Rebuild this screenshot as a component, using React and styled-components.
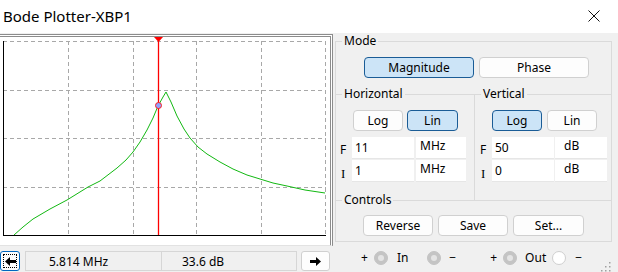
import styled, { createGlobalStyle } from "styled-components";

const Global = createGlobalStyle`
  body {
    margin: 0;
    background: #f0f0f0;
    font-family: "Noto Sans", "Open Sans", sans-serif;
    font-size: 12px;
    color: #000;
  }
`;

const Window = styled.div`
  width: 618px;
  height: 272px;
  display: flex;
  flex-direction: column;
  overflow: hidden;
  background: #f0f0f0;
`;
const TitleBar = styled.div`
  height: 33px;
  background: #fff;
  display: flex;
  align-items: center;
  justify-content: space-between;
  padding-left: 3px;
  flex-shrink: 0;
`;
const Title = styled.div`
  font-size: 15px;
  margin-top: -2px;
`;
const CloseBtn = styled.div`
  width: 46px;
  height: 33px;
  display: flex;
  align-items: center;
  justify-content: center;
  margin-right: 1px;
  margin-top: -2px;
`;
const Body = styled.div`
  display: flex;
  gap: 2px;
  flex: 1;
`;
const LeftCol = styled.div`
  width: 333px;
  display: flex;
  flex-direction: column;
  padding-top: 1px;
`;
const PlotPanel = styled.div`
  height: 208px;
  background: #fff;
  border-top: 3px double #8c8c8c;
  border-right: 3px double #8c8c8c;
  border-bottom: 1px solid #e2e2e2;
`;
const Readout = styled.div`
  display: flex;
  align-items: center;
  height: 20px;
  margin-top: 5px;
`;
const ArrowBtn = styled.div`
  width: ${(p) => p.$w}px;
  height: 20px;
  box-sizing: border-box;
  background: #fdfdfd;
  border: 1px solid ${(p) => (p.$focus ? "#0067c0" : "#d0d0d0")};
  border-radius: 3px;
  display: flex;
  align-items: center;
  justify-content: center;
  margin-left: ${(p) => p.$ml || 0}px;
  position: relative;
  &::after {
    content: "";
    display: ${(p) => (p.$focus ? "block" : "none")};
    position: absolute;
    inset: 2px;
    border: 1px dotted #000;
  }
`;
const ReadField = styled.div`
  width: ${(p) => p.$w}px;
  height: 20px;
  box-sizing: border-box;
  border: 1px solid #d6d6d6;
  padding-left: ${(p) => p.$pl}px;
  display: flex;
  align-items: center;
  font-size: 12px;
  margin-left: ${(p) => p.$ml || 0}px;
`;

const RightCol = styled.div`
  width: 277px;
  display: flex;
  flex-direction: column;
`;
const Group = styled.fieldset`
  margin: 0;
  padding: 0;
  min-width: 0;
  border: 1px solid #dadada;
  border-width: ${(p) => p.$bw || "1px"};
  box-sizing: border-box;
  height: ${(p) => p.$h}px;
  width: ${(p) => (p.$w ? p.$w + "px" : "auto")};
  margin-top: ${(p) => p.$mt || 0}px;
`;
const Legend = styled.legend`
  margin-left: 6px;
  padding: 0 2px;
  line-height: 16px;
  height: 16px;
  font-size: 12px;
`;
const BtnRow = styled.div`
  display: flex;
  gap: ${(p) => p.$gap}px;
  padding-left: ${(p) => p.$pl}px;
  margin-top: ${(p) => p.$mt}px;
`;
const Btn = styled.div`
  width: ${(p) => p.$w}px;
  height: 21px;
  box-sizing: border-box;
  border-radius: 4px;
  border: 1px solid ${(p) => (p.$active ? "#1a5c96" : "#d0d0d0")};
  background: ${(p) => (p.$active ? "#cce4f7" : "#fdfdfd")};
  display: flex;
  align-items: center;
  justify-content: center;
  font-size: 12px;
`;
const Split = styled.div`
  display: flex;
  margin-top: 8px;
`;
const FieldRows = styled.div`
  display: flex;
  flex-direction: column;
  gap: 1px;
  margin-top: 6px;
`;
const FieldRow = styled.div`
  display: flex;
  align-items: center;
  height: 22px;
`;
const FLabel = styled.div`
  width: ${(p) => p.$w}px;
  padding-left: ${(p) => p.$pl}px;
  box-sizing: border-box;
  font-family: ${(p) =>
    p.$serif ? '"Liberation Serif", serif' : '"Noto Sans", sans-serif'};
  font-size: ${(p) => (p.$serif ? 13 : 12)}px;
  margin-top: ${(p) => (p.$serif ? 6 : 3)}px;
`;
const Input = styled.div`
  width: ${(p) => p.$w}px;
  height: 22px;
  box-sizing: border-box;
  background: #fff;
  border-bottom: 1px solid #e6e6e6;
  padding-left: ${(p) => p.$pl}px;
  padding-top: ${(p) => p.$pt}px;
  margin-left: ${(p) => p.$ml || 0}px;
  font-size: 12px;
  line-height: 16px;
`;
const Terminals = styled.div`
  display: flex;
  align-items: center;
  height: 31px;
  position: relative;
`;
const TText = styled.span`
  font-size: 12px;
  margin-left: ${(p) => p.$ml}px;
`;
const Jack = styled.div`
  width: 14px;
  height: 14px;
  box-sizing: border-box;
  border-radius: 50%;
  margin-left: ${(p) => p.$ml}px;
  background: ${(p) => (p.$empty ? "#fff" : "#c4c4c4")};
  border: 1px solid ${(p) => (p.$empty ? "#cfcfcf" : "#c4c4c4")};
  display: flex;
  align-items: center;
  justify-content: center;
  &::after {
    content: "";
    width: 6px;
    height: 6px;
    border-radius: 50%;
    background: ${(p) => (p.$empty ? "transparent" : "#e4e4e4")};
  }
`;
const Grip = styled.svg`
  position: absolute;
  right: 1px;
  bottom: 1px;
`;

const curve = [
  [14, 236], [23, 228], [33, 220], [50, 210], [67, 201], [88, 188], [100, 182],
  [117, 169], [126, 161], [133, 153], [140, 143], [147, 131], [153, 119], [158, 107],
  [163, 98], [166, 93], [171, 103], [177, 117], [184, 130], [190, 139], [198, 148],
  [207, 155], [220, 163], [233, 170], [247, 176], [260, 180], [273, 184], [287, 187],
  [305, 191], [325, 194],
];

function Plot() {
  const xs = [68, 133, 196, 261, 325];
  const ys = [42, 91, 139, 188];
  return (
    <svg width="330" height="208" style={{ display: "block" }}>
      <g transform="translate(0,-38)">
        {xs.map((x) => (
          <line key={x} x1={x + 0.5} y1={42} x2={x + 0.5} y2={236} stroke="#a8a8a8" strokeDasharray="4 3" />
        ))}
        {ys.map((y) => (
          <line key={y} x1={3} y1={y + 0.5} x2={326} y2={y + 0.5} stroke="#a8a8a8" strokeDasharray="4 3" />
        ))}
        <line x1={3.5} y1={42} x2={3.5} y2={237} stroke="#000" />
        <line x1={3} y1={236.5} x2={326} y2={236.5} stroke="#000" />
        <polyline points={curve.map((p) => p.join(",")).join(" ")} fill="none" stroke="#12b812" strokeWidth="1" />
        <line x1={158.5} y1={38} x2={158.5} y2={236} stroke="#ff0000" strokeWidth="1.3" />
        <path d="M154 38 L163 38 L158.5 43 Z" fill="#ff0000" />
        <circle cx={158.5} cy={106.5} r={3} fill="#8fa2ff" stroke="#ff2020" strokeWidth="1" />
      </g>
    </svg>
  );
}

export default function App() {
  return (
    <>
      <Global />
      <Window>
        <TitleBar>
          <Title>Bode Plotter-XBP1</Title>
          <CloseBtn>
            <svg width="12" height="12" viewBox="0 0 12 12">
              <path d="M0.5 0.5 L11.5 11.5 M11.5 0.5 L0.5 11.5" stroke="#111" strokeWidth="1" />
            </svg>
          </CloseBtn>
        </TitleBar>
        <Body>
          <LeftCol>
            <PlotPanel>
              <Plot />
            </PlotPanel>
            <Readout>
              <ArrowBtn $w={20} $focus>
                <svg width="11" height="9" viewBox="0 0 11 9">
                  <path d="M0 4.5 L5 0 L5 3 L11 3 L11 6 L5 6 L5 9 Z" fill="#000" />
                </svg>
              </ArrowBtn>
              <ReadField $w={137} $pl={23} $ml={5}>5.814 MHz</ReadField>
              <ReadField $w={136} $pl={20} $ml={-1}>33.6 dB</ReadField>
              <ArrowBtn $w={29} $ml={4}>
                <svg width="11" height="9" viewBox="0 0 11 9">
                  <path d="M11 4.5 L6 0 L6 3 L0 3 L0 6 L6 6 L6 9 Z" fill="#000" />
                </svg>
              </ArrowBtn>
            </Readout>
          </LeftCol>
          <RightCol>
            <Group $h={209} $w={277}>
              <Legend>Mode</Legend>
              <BtnRow $gap={5} $pl={28} $mt={8}>
                <Btn $w={110} $active>Magnitude</Btn>
                <Btn $w={110}>Phase</Btn>
              </BtnRow>
              <Split>
                <Group $bw="1px 0 0 0" $w={138} $h={114}>
                  <Legend>Horizontal</Legend>
                  <BtnRow $gap={4} $pl={17} $mt={8}>
                    <Btn $w={50}>Log</Btn>
                    <Btn $w={51} $active>Lin</Btn>
                  </BtnRow>
                  <FieldRows>
                    <FieldRow>
                      <FLabel $w={16} $pl={4}>F</FLabel>
                      <Input $w={62} $pl={3} $pt={3}>11</Input>
                      <Input $w={50} $pl={4} $pt={1} $ml={2}>MHz</Input>
                    </FieldRow>
                    <FieldRow>
                      <FLabel $w={16} $pl={5} $serif>I</FLabel>
                      <Input $w={62} $pl={3} $pt={3}>1</Input>
                      <Input $w={50} $pl={4} $pt={1} $ml={2}>MHz</Input>
                    </FieldRow>
                  </FieldRows>
                </Group>
                <Group $bw="1px 0 0 1px" $w={137} $h={114}>
                  <Legend>Vertical</Legend>
                  <BtnRow $gap={5} $pl={17} $mt={8}>
                    <Btn $w={50} $active>Log</Btn>
                    <Btn $w={50}>Lin</Btn>
                  </BtnRow>
                  <FieldRows>
                    <FieldRow>
                      <FLabel $w={17} $pl={5}>F</FLabel>
                      <Input $w={62} $pl={3} $pt={3}>50</Input>
                      <Input $w={52} $pl={9} $pt={1} $ml={1}>dB</Input>
                    </FieldRow>
                    <FieldRow>
                      <FLabel $w={17} $pl={6} $serif>I</FLabel>
                      <Input $w={62} $pl={3} $pt={3}>0</Input>
                      <Input $w={52} $pl={9} $pt={1} $ml={1}>dB</Input>
                    </FieldRow>
                  </FieldRows>
                </Group>
              </Split>
              <Group $bw="1px 0 0 0" $h={42} $mt={-8}>
                <Legend>Controls</Legend>
                <BtnRow $gap={5} $pl={27} $mt={7}>
                  <Btn $w={70}>Reverse</Btn>
                  <Btn $w={70}>Save</Btn>
                  <Btn $w={71}>Set...</Btn>
                </BtnRow>
              </Group>
            </Group>
            <Terminals>
              <TText $ml={26}>+</TText>
              <Jack $ml={6} />
              <TText $ml={9}>In</TText>
              <Jack $ml={19} />
              <TText $ml={8}>−</TText>
              <TText $ml={34}>+</TText>
              <Jack $ml={6} />
              <TText $ml={8}>Out</TText>
              <Jack $ml={6} $empty />
              <TText $ml={9}>−</TText>
              <Grip width="12" height="12" viewBox="0 0 12 12">
                {[[10, 2], [10, 6], [6, 6], [10, 10], [6, 10], [2, 10]].map(([x, y]) => (
                  <rect key={x + "-" + y} x={x} y={y} width="1.5" height="1.5" fill="#a0a0a0" />
                ))}
              </Grip>
            </Terminals>
          </RightCol>
        </Body>
      </Window>
    </>
  );
}
